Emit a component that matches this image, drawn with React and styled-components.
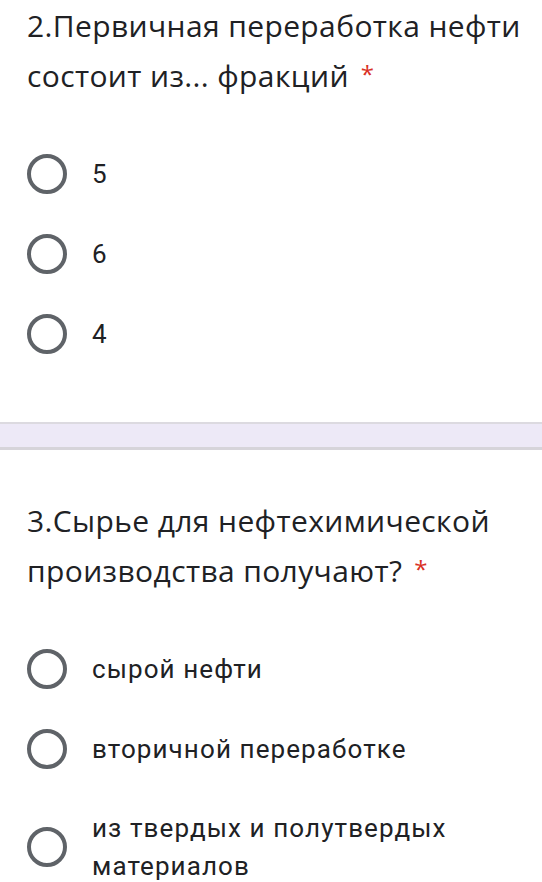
import { styled, createGlobalStyle } from "styled-components";

const GlobalStyle = createGlobalStyle`
  body {
    margin: 0;
    background: #ffffff;
    font-family: Roboto, "Noto Sans", sans-serif;
  }
`;

const questions = [
  {
    title: "2.Первичная переработка нефти состоит из... фракций",
    options: ["5", "6", "4"],
  },
  {
    title: "3.Сырье для нефтехимической производства получают?",
    options: [
      "сырой нефти",
      "вторичной переработке",
      "из твердых и полутвердых материалов",
    ],
  },
];

export default function App() {
  return (
    <Page>
      <GlobalStyle />
      <Question data={questions[0]} first />
      <Divider />
      <Question data={questions[1]} />
    </Page>
  );
}

function Question({ data, first }) {
  return (
    <Card $first={first}>
      <Title>
        {data.title}
        <Required>*</Required>
      </Title>
      <Options>
        {data.options.map((opt) => (
          <Option key={opt}>
            <Radio />
            <Label>{opt}</Label>
          </Option>
        ))}
      </Options>
    </Card>
  );
}

const Page = styled.div`
  width: 542px;
  height: 882px;
  overflow: hidden;
`;

const Card = styled.section`
  padding: ${(p) => (p.$first ? "2px 20px 48px 27px" : "47px 20px 0 27px")};
`;

const Title = styled.div`
  font-family: "Open Sans", Roboto, sans-serif;
  font-size: 30px;
  line-height: 48px;
  letter-spacing: 0.38px;
  color: #202124;
`;

const Required = styled.span`
  color: #d93025;
  font-size: 24px;
  vertical-align: 4px;
  margin-left: 12px;
`;

const Options = styled.div`
  display: flex;
  flex-direction: column;
  margin-top: 34px;
`;

const Option = styled.div`
  display: flex;
  align-items: center;
  gap: 25px;
  padding: 20px 0;
`;

const Radio = styled.span`
  flex: none;
  width: 32px;
  height: 32px;
  border: 4px solid #5f6368;
  border-radius: 50%;
`;

const Label = styled.div`
  font-size: 26px;
  line-height: 38px;
  letter-spacing: 1.1px;
  color: #202124;
`;

const Divider = styled.div`
  height: 23px;
  background: #ede9f7;
  border-top: 2px solid #dcdae0;
  border-bottom: 3px solid #d6d4da;
`;
